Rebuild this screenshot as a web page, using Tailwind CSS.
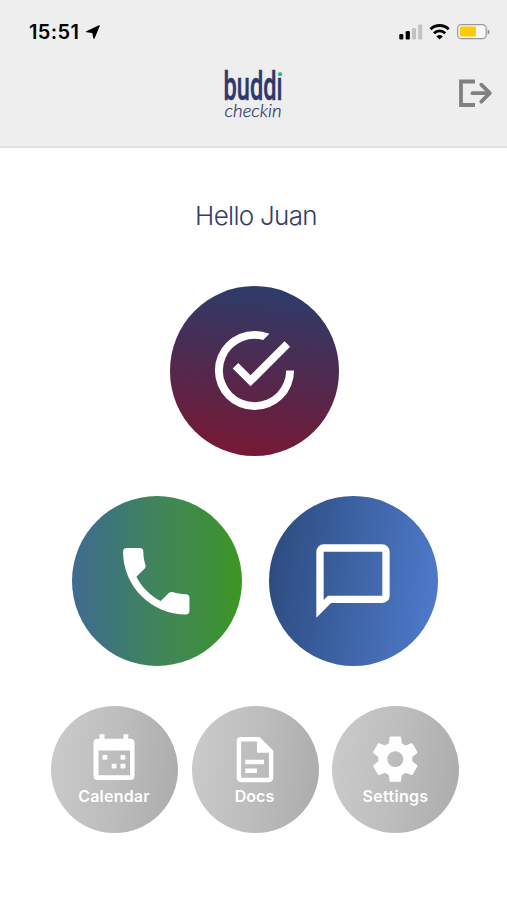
<!DOCTYPE html>
<html lang="en">
<head>
<meta charset="utf-8">
<title>buddi checkin</title>
<script src="https://cdn.jsdelivr.net/npm/@tailwindcss/browser@4"></script>
</head>
<body class="bg-white font-['Inter',sans-serif]">
<div class="w-[507px] h-[900px] overflow-hidden flex flex-col">
  <header class="h-[148px] shrink-0 bg-[#eeeeee] border-b-2 border-[#e0e0e0]">
    <div class="h-16 flex items-center justify-between pl-[29px] pr-[16px]">
      <div class="flex items-center gap-[4px]">
        <span class="text-[20px] leading-6 font-semibold text-black tracking-[0.35px] w-[53px] whitespace-nowrap">15:51</span>
        <svg class="w-[14px] h-[14px] -mt-px" viewBox="0 0 14 14"><path d="M13.2.8 8 13.2 6.7 7.4.6 6.7Z" fill="#000" stroke="#000" stroke-width="1.2" stroke-linejoin="round"/></svg>
      </div>
      <div class="flex items-center">
        <svg class="w-[92px] h-[18px]" viewBox="399 23 92 18">
          <rect x="399.3" y="34" width="4" height="5.4" rx="1.2"/>
          <rect x="405.7" y="31" width="4.2" height="8.4" rx="1.2"/>
          <rect x="412" y="28" width="4" height="11.4" rx="1.2" fill="#c2c2c2"/>
          <rect x="418.2" y="24.5" width="4" height="14.9" rx="1.2" fill="#c2c2c2"/>
          <g fill="none" stroke="#000" stroke-width="2.8"><path d="M430.5 29.2a13 13 0 0 1 18.2 0"/><path d="M434 33.2a8 8 0 0 1 11.2 0"/></g>
          <path d="M436.4 36.4a4.8 4.8 0 0 1 6.4 0l-3.2 3.2Z"/>
          <rect x="457.6" y="24.6" width="28.6" height="14" rx="3.8" fill="#f7f7f7" stroke="#999" stroke-width="1.2"/>
          <rect x="459.8" y="26.6" width="16.2" height="10" rx="1.5" fill="#fdcb0a"/>
          <path d="M487.6 29.5a2.6 2.6 0 0 1 0 5Z" fill="#888"/>
        </svg>
      </div>
    </div>
    <div class="h-[60px] grid grid-cols-[1fr_66px_1fr] items-center pl-[13px] pr-[13px]">
      <span></span>
      <svg class="w-[66px] h-[60px] overflow-visible" viewBox="220 64 66 60">
        <text x="222.6" y="100.3" font-family="Roboto,sans-serif" font-size="41.5" font-weight="500" fill="#30386b" stroke="#30386b" stroke-width=".5" textLength="59" lengthAdjust="spacingAndGlyphs">buddi</text>
        <rect x="276.3" y="66" width="6" height="10.8" fill="#eee"/>
        <rect x="277.1" y="72.3" width="4" height="3.8" rx="1.5" fill="#27b978"/>
        <text x="223.6" y="117" font-family="Lato,sans-serif" font-size="18" font-style="italic" font-weight="300" fill="#30386b" stroke="#30386b" stroke-width=".25" textLength="57" lengthAdjust="spacingAndGlyphs">checkin</text>
      </svg>
      <svg class="justify-self-end w-[36px] h-[30px]" viewBox="458 79 36 30" fill="none" stroke="#808080" stroke-width="3.8">
        <path d="M475 81.5H461V105H475"/><path stroke-linecap="round" d="M472.500 93.2H489"/><path stroke-linecap="round" stroke-linejoin="round" d="M481.300 84.700 489.800 93.200 481.300 101.700"/>
      </svg>
    </div>
  </header>
  <main class="flex flex-col items-center">
    <h1 class="mt-[51px] h-[34px] ml-[5px] text-[26px] leading-[34px] font-light tracking-[-0.7px] text-[#343b6a] whitespace-nowrap">Hello Juan</h1>
    <button class="mt-[53px] ml-[2px] size-[169.5px] rounded-full bg-[linear-gradient(188deg,#2f3b68_8%,#51294f_50%,#7a1832_98%)] flex items-center justify-center">
      <svg class="size-[95px]" viewBox="0 0 24 24" fill="#fff"><path d="M20,12A8,8 0 0,1 12,20A8,8 0 0,1 4,12A8,8 0 0,1 12,4C12.76,4 13.5,4.11 14.2,4.31L15.77,2.74C14.61,2.26 13.34,2 12,2A10,10 0 0,0 2,12A10,10 0 0,0 12,22A10,10 0 0,0 22,12M7.91,10.08L6.5,11.5L11,16L21,6L19.59,4.58L11,13.17L7.91,10.08Z"/></svg>
    </button>
    <div class="mt-[40.5px] ml-[3px] flex gap-[27px]">
      <button class="size-[169.5px] rounded-full bg-[linear-gradient(90deg,#426b91_0%,#3c7777_25%,#41855b_50%,#3e8c43_75%,#3c9722_100%)] flex items-center justify-center">
        <svg class="size-[88.5px] -ml-px" viewBox="0 0 24 24" fill="#fff"><path d="M6.62,10.79C8.06,13.62 10.38,15.94 13.21,17.38L15.41,15.18C15.69,14.9 16.08,14.82 16.43,14.93C17.55,15.3 18.75,15.5 20,15.5A1,1 0 0,1 21,16.5V20A1,1 0 0,1 20,21A17,17 0 0,1 3,4A1,1 0 0,1 4,3H7.5A1,1 0 0,1 8.5,4C8.5,5.25 8.7,6.45 9.07,7.57C9.18,7.92 9.1,8.31 8.82,8.59L6.62,10.79Z"/></svg>
      </button>
      <button class="size-[169.5px] rounded-full bg-[linear-gradient(98deg,#2c4a7e_2%,#3e64a5_50%,#4f7bce_98%)] flex items-center justify-center">
        <svg class="size-[88px]" viewBox="0 0 24 24" fill="#fff"><path d="M20,2H4A2,2 0 0,0 2,4V22L6,18H20A2,2 0 0,0 22,16V4A2,2 0 0,0 20,2M20,16H5.17L4,17.17V4H20V16Z"/></svg>
      </button>
    </div>
    <div class="mt-[40px] ml-[3px] flex gap-[13.5px] text-white text-[16px] leading-5 font-semibold">
      <button class="size-[127px] rounded-full bg-[linear-gradient(98deg,#cacaca_5%,#bdbdbd_50%,#adadad_95%)] flex flex-col items-center pt-[27px]">
        <svg class="w-[42px] h-[50px] -ml-[1.5px]" viewBox="93 733 42 50">
          <path fill="#fff" fill-rule="evenodd" d="M97.5 738.7H99.5V734.3H104.5V738.7H123.500V734.3H128.300V738.7H130.500A4 4 0 0 1 134.500 742.7V776A4 4 0 0 1 130.500 780H97.500A4 4 0 0 1 93.500 776V742.7A4 4 0 0 1 97.500 738.700ZM98.500 750.500V775.300H130V750.500Z"/>
          <g fill="#fff"><rect x="102.500" y="755" width="4.800" height="4.800" rx=".8"/><rect x="120.500" y="755" width="4.800" height="4.800" rx=".8"/><rect x="111.700" y="763.800" width="4.800" height="4.800" rx=".8"/><rect x="120.500" y="763.800" width="4.800" height="4.800" rx=".8"/></g>
        </svg>
        <span class="mt-[3px] -ml-px tracking-[0.2px]">Calendar</span>
      </button>
      <button class="size-[127px] rounded-full bg-[linear-gradient(98deg,#cacaca_5%,#bdbdbd_50%,#adadad_95%)] flex flex-col items-center pt-[27px]">
        <svg class="w-[42px] h-[50px] -ml-px" viewBox="234 733 42 50" fill="none" stroke="#fff">
          <path stroke-width="4.400" stroke-linejoin="round" d="M240.500 739.200H258.700L271.100 751.500V777.700A2.300 2.300 0 0 1 268.800 780H241.200A2.300 2.300 0 0 1 238.900 777.700V741A1.800 1.800 0 0 1 240.500 739.200Z"/>
          <path fill="#fff" stroke="none" d="M257 738H260L272.500 750.500V752.700H257Z"/>
          <path stroke-width="4.600" d="M245.300 762H264M245.300 770.800H257"/>
        </svg>
        <span class="mt-[3px] -ml-px">Docs</span>
      </button>
      <button class="size-[127px] rounded-full bg-[linear-gradient(98deg,#cacaca_5%,#bdbdbd_50%,#adadad_95%)] flex flex-col items-center pt-[27px]">
        <svg class="w-[54.6px] h-[50px]" viewBox="0 .5 24 22" fill="#fff"><path d="M19.430 12.980c.040-.320.070-.640.070-.980s-.030-.660-.070-.980l2.110-1.650c.190-.150.240-.420.120-.640l-2-3.460c-.120-.220-.390-.300-.610-.220l-2.490 1c-.520-.400-1.080-.730-1.690-.980l-.380-2.650C14.460 2.180 14.250 2 14 2h-4c-.250 0-.460.180-.490.420l-.380 2.650c-.610.250-1.170.590-1.690.980l-2.490-1c-.230-.090-.490 0-.610.220l-2 3.460c-.130.220-.070.490.120.640l2.110 1.650c-.040.320-.070.650-.070.980s.030.660.070.980l-2.110 1.650c-.190.150-.240.420-.120.640l2 3.460c.120.220.390.300.610.220l2.490-1c.520.400 1.080.730 1.690.980l.380 2.650c.030.240.240.420.490.420h4c.250 0 .460-.180.490-.420l.380-2.650c.610-.250 1.170-.590 1.690-.980l2.490 1c.230.090.490 0 .610-.220l2-3.460c.120-.220.070-.490-.120-.640l-2.110-1.650zM12 15.500c-1.930 0-3.500-1.570-3.500-3.500s1.570-3.500 3.500-3.500 3.500 1.570 3.500 3.500-1.570 3.500-3.500 3.500z"/></svg>
        <span class="mt-[3px] tracking-[0.3px]">Settings</span>
      </button>
    </div>
  </main>
</div>
</body>
</html>
